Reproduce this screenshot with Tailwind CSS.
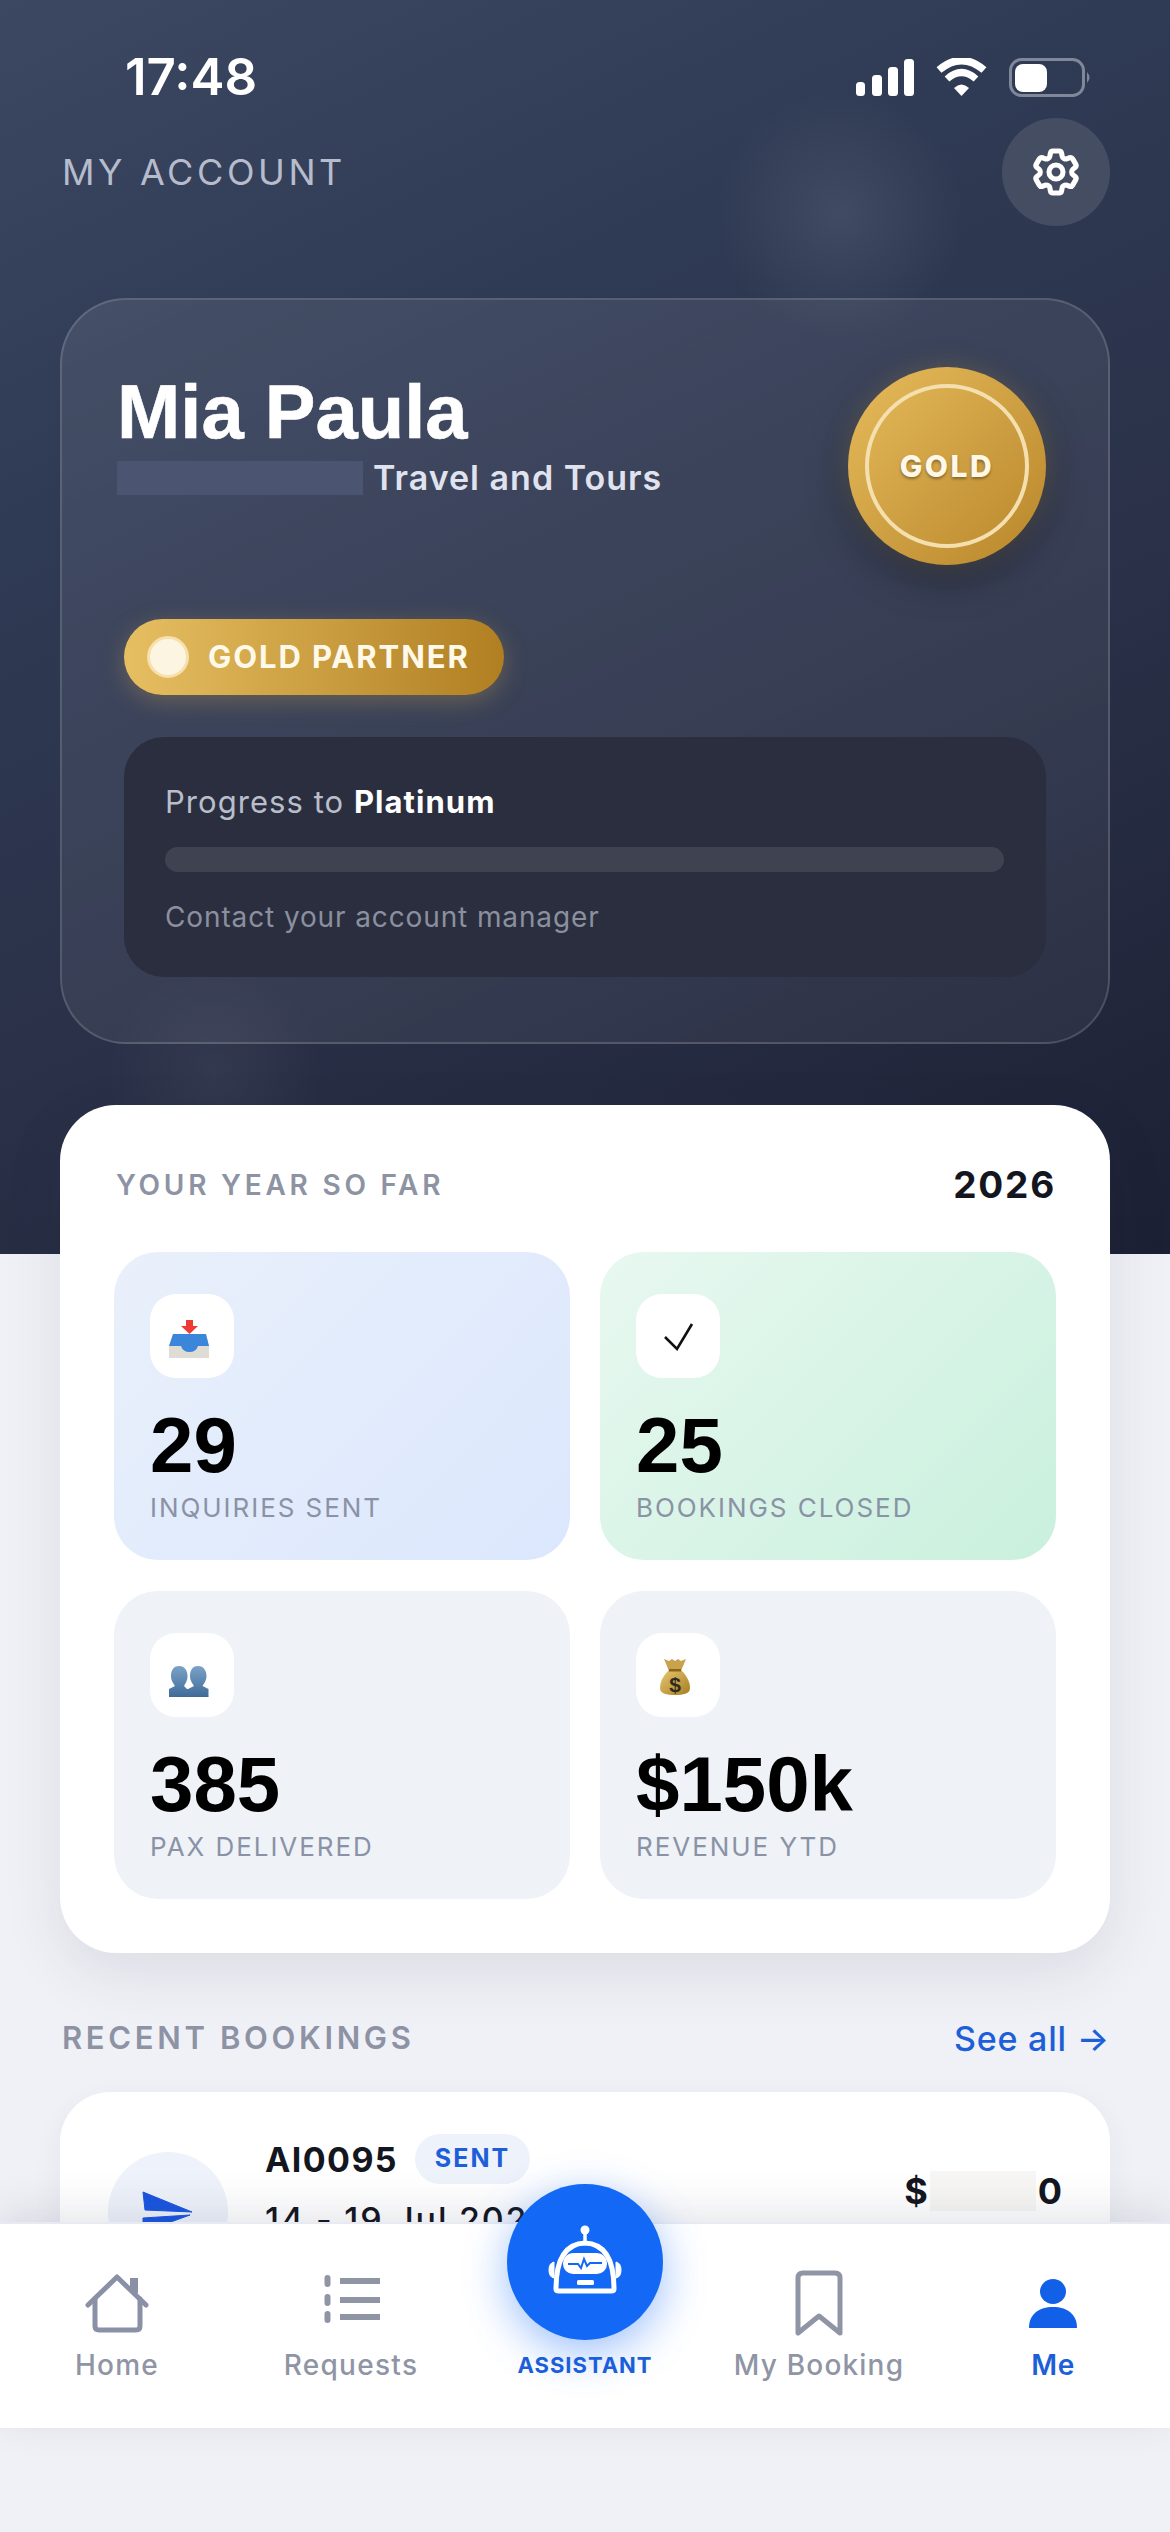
<!DOCTYPE html>
<html>
<head>
<meta charset="utf-8">
<script src="https://cdn.jsdelivr.net/npm/@tailwindcss/browser@4"></script>
</head>
<body>
<div class="relative w-[1170px] h-[2532px] overflow-hidden bg-[#f0f1f6] font-['Inter','Liberation_Sans',sans-serif]">

  <!-- Hero -->
  <div class="relative h-[1254px] bg-[linear-gradient(155deg,#3c4862_0%,#2f3a54_30%,#2a3148_60%,#1c2034_100%)]">
    <div class="absolute inset-0 bg-[radial-gradient(circle_at_840px_215px,rgba(255,255,255,0.09)_0px,rgba(255,255,255,0)_125px),radial-gradient(circle_at_215px_1075px,rgba(255,255,255,0.05)_0px,rgba(255,255,255,0)_110px)]"></div>

    <div class="relative">
      <!-- Status bar -->
      <div class="flex items-start justify-between pl-[125px] pr-[78px] pt-[47px] h-[118px]">
        <span class="text-[51px] leading-[60px] font-semibold text-white">17:48</span>
        <svg class="mt-[11px]" width="236" height="40" viewBox="856 58 236 40" fill="none">
          <rect x="856" y="82" width="9" height="14" rx="3.5" fill="#fff"/>
          <rect x="872" y="75" width="10" height="21" rx="3.5" fill="#fff"/>
          <rect x="888" y="67" width="10" height="29" rx="3.5" fill="#fff"/>
          <rect x="904" y="59" width="10" height="37" rx="3.5" fill="#fff"/>
          <path d="M939 70 Q961.5 51 984 70" stroke="#fff" stroke-width="7.5" fill="none"/>
          <path d="M947 79 Q961.5 66 976 79" stroke="#fff" stroke-width="7" fill="none"/>
          <path d="M954 88 L961.500 96 L969 88 Q961.500 81 954 88 Z" fill="#fff"/>
          <rect x="1010.500" y="59.500" width="73" height="36" rx="11" stroke="#7f8798" stroke-width="3"/>
          <rect x="1015" y="64" width="32" height="28" rx="8" fill="#fff"/>
          <path d="M1087 72 Q1092 77.500 1087 83 Z" fill="#7f8798"/>
        </svg>
      </div>

      <!-- Header -->
      <div class="flex items-center justify-between pl-[62px] pr-[60px] h-[108px]">
        <span class="text-[36px] leading-[44px] tracking-[3.600px] text-[#b6bccb] font-normal">MY ACCOUNT</span>
        <div class="flex h-[108px] w-[108px] items-center justify-center rounded-full bg-[#454d62]">
          <svg width="56" height="56" viewBox="0 0 24 24" fill="none" stroke="#fff" stroke-width="2.200" stroke-linejoin="round">
            <path d="M9.594 3.94c.09-.542.56-.94 1.11-.94h2.593c.55 0 1.02.398 1.11.94l.213 1.281c.063.374.313.686.645.87.074.04.147.083.22.127.325.196.72.257 1.075.124l1.217-.456a1.125 1.125 0 0 1 1.37.49l1.296 2.247a1.125 1.125 0 0 1-.26 1.431l-1.003.827c-.293.241-.438.613-.43.992a7.723 7.723 0 0 1 0 .255c-.008.378.137.75.43.991l1.004.827c.424.35.534.955.26 1.43l-1.298 2.247a1.125 1.125 0 0 1-1.369.491l-1.217-.456c-.355-.133-.75-.072-1.076.124a6.47 6.47 0 0 1-.22.128c-.331.183-.581.495-.644.869l-.213 1.281c-.09.543-.56.94-1.11.94h-2.594c-.55 0-1.019-.398-1.11-.94l-.213-1.281c-.062-.374-.312-.686-.644-.87a6.52 6.52 0 0 1-.22-.127c-.325-.196-.72-.257-1.076-.124l-1.217.456a1.125 1.125 0 0 1-1.369-.49l-1.297-2.247a1.125 1.125 0 0 1 .26-1.431l1.004-.827c.292-.24.437-.613.43-.991a6.932 6.932 0 0 1 0-.255c.007-.38-.138-.751-.43-.992l-1.004-.827a1.125 1.125 0 0 1-.26-1.43l1.297-2.247a1.125 1.125 0 0 1 1.37-.491l1.216.456c.356.133.751.072 1.076-.124.072-.044.146-.086.22-.128.332-.183.582-.495.644-.869l.214-1.28Z"/>
            <circle cx="12" cy="12" r="3"/>
          </svg>
        </div>
      </div>

      <!-- Account card -->
      <div class="mx-[60px] mt-[72px] h-[746px] rounded-[66px] border-2 border-white/15 bg-[linear-gradient(155deg,rgba(255,255,255,0.085),rgba(255,255,255,0.05))] px-[62px] pt-[67px]">
        <div class="flex items-start justify-between">
          <div class="-ml-[7px] pt-[5px]">
            <div class="font-['Liberation_Sans',sans-serif] text-[76px] leading-[80px] font-bold text-white [-webkit-text-stroke:0.6px_white]">Mia Paula</div>
            <div class="mt-[9px] flex items-center">
              <span class="h-[34px] w-[246px] bg-[#4b5571]"></span>
              <span class="ml-[10px] text-[34px] leading-[34px] font-semibold tracking-[1px] text-[#e0e3ee]">Travel and Tours</span>
            </div>
          </div>
          <div class="flex h-[198px] w-[198px] items-center justify-center rounded-full bg-[linear-gradient(135deg,#e6bb5c,#b8862a)] shadow-[0_14px_40px_rgba(0,0,0,0.35),0_0_24px_rgba(230,190,100,0.25)]">
            <div class="flex h-[164px] w-[164px] items-center justify-center rounded-full border-[4px] border-[#f4dfae]">
              <span class="text-[30px] font-extrabold tracking-[2.5px] text-[#fff8e8] [text-shadow:0_2px_3px_rgba(0,0,0,0.35)]">GOLD</span>
            </div>
          </div>
        </div>

        <div class="mt-[54px] flex h-[76px] w-[380px] items-center rounded-full bg-[linear-gradient(90deg,#e6bf62,#b07f22)] pl-[23px] shadow-[0_6px_24px_rgba(214,170,80,0.3)]">
          <span class="h-[42px] w-[42px] rounded-full border-[3px] border-[#f5e0ae] bg-[#fcf5e2]"></span>
          <span class="ml-[19px] text-[31px] font-bold tracking-[1.900px] text-[#fff9ea]">GOLD PARTNER</span>
        </div>

        <div class="mt-[42px] h-[240px] rounded-[40px] bg-[#2a2e3e] pl-[41px] pr-[42px] pt-[46px]">
          <div class="text-[31px] leading-[38px] tracking-[1.050px] text-[#b9becb]">Progress to <span class="font-bold text-white">Platinum</span></div>
          <div class="mt-[26px] h-[25px] rounded-full bg-[#3f4351]"></div>
          <div class="mt-[30px] text-[28px] leading-[30px] tracking-[0.880px] text-[#8b909f]">Contact your account manager</div>
        </div>
      </div>
    </div>
  </div>

  <!-- Year card -->
  <div class="relative mx-[60px] -mt-[149px] h-[848px] rounded-[56px] bg-white px-[54px] pt-[60px] shadow-[0_20px_60px_rgba(40,50,80,0.10)]">
    <div class="flex h-[40px] items-center justify-between pl-[2px]">
      <span class="text-[28px] font-semibold tracking-[3.750px] text-[#8d93a3]">YOUR YEAR SO FAR</span>
      <span class="text-[37px] font-bold tracking-[1.800px] text-[#14161f]">2026</span>
    </div>
    <div class="mt-[47px] grid grid-cols-2 gap-x-[30px] gap-y-[31px]">

      <div class="h-[308px] rounded-[44px] bg-[linear-gradient(135deg,#e9f0fb,#dbe7fd)] pl-[36px] pt-[42px]">
        <div class="h-[84px] w-[84px] rounded-[26px] bg-white">
          <svg width="84" height="84" viewBox="0 0 84 84">
            <path d="M36 26h7v6h5l-8.500 8-8.500-8h5z" fill="#ee3b33"/>
            <path d="M23 40h33l3 12v12H19V52z" fill="#dedcd5"/>
            <path d="M23 40h33l3 12H48q-2 6-8.500 6T31 52H19z" fill="#3b86da"/>
          </svg>
        </div>
        <div class="mt-[29px] font-['Liberation_Sans',sans-serif] text-[78px] leading-[76px] font-bold text-black">29</div>
        <div class="mt-[10px] text-[26px] leading-[30px] tracking-[1.950px] text-[#8a92a6]">INQUIRIES SENT</div>
      </div>

      <div class="h-[308px] rounded-[44px] bg-[linear-gradient(135deg,#e8f8f0,#c9f0dd)] pl-[36px] pt-[42px]">
        <div class="h-[84px] w-[84px] rounded-[26px] bg-white">
          <svg width="84" height="84" viewBox="0 0 84 84" fill="none">
            <path d="M29 43 L41 55 L56 30" stroke="#111" stroke-width="2.600"/>
          </svg>
        </div>
        <div class="mt-[29px] font-['Liberation_Sans',sans-serif] text-[78px] leading-[76px] font-bold text-black">25</div>
        <div class="mt-[10px] text-[26px] leading-[30px] tracking-[1.950px] text-[#8a92a6]">BOOKINGS CLOSED</div>
      </div>

      <div class="h-[308px] rounded-[44px] bg-[#eff3f8] pl-[36px] pt-[42px]">
        <div class="h-[84px] w-[84px] rounded-[26px] bg-white">
          <svg width="84" height="84" viewBox="0 0 84 84">
            <defs>
              <linearGradient id="bust" x1="0" y1="0" x2="0" y2="1"><stop offset="0" stop-color="#7ba3c8"/><stop offset="1" stop-color="#3f6b98"/></linearGradient>
            </defs>
            <path d="M29 33c6 0 8.500 5 8.500 10 0 5-2.500 8-3.500 10l3 3h2v8H19v-8l6-3c-1-2-4-5-4-10 0-5 2-10 8-10z" fill="url(#bust)"/>
            <path d="M48 33c6 0 8.500 5 8.500 10 0 5-3 8-4 10l6 3v8H38v-8l6-3c-1-2-4-5-4-10 0-5 2-10 8-10z" fill="url(#bust)"/>
          </svg>
        </div>
        <div class="mt-[29px] font-['Liberation_Sans',sans-serif] text-[78px] leading-[76px] font-bold text-black">385</div>
        <div class="mt-[10px] text-[26px] leading-[30px] tracking-[1.950px] text-[#8a92a6]">PAX DELIVERED</div>
      </div>

      <div class="h-[308px] rounded-[44px] bg-[#eff3f8] pl-[36px] pt-[42px]">
        <div class="h-[84px] w-[84px] rounded-[26px] bg-white">
          <svg width="84" height="84" viewBox="0 0 84 84">
            <defs>
              <linearGradient id="bag" x1="0" y1="0" x2="1" y2="1"><stop offset="0" stop-color="#e6c871"/><stop offset="1" stop-color="#a87d22"/></linearGradient>
            </defs>
            <path d="M28 26 L33 28 L36 26 L39 28 L42 26 L45 28 L50 26 L45 38 H33 Z" fill="#c9a24e"/>
            <path d="M33 37 H45 C52 44 54 50 54 55 C54 61 47 62 39 62 C31 62 24 61 24 55 C24 50 26 44 33 37Z" fill="url(#bag)"/>
            <rect x="33" y="36" width="12" height="2.500" fill="#8a6516"/>
            <text x="39" y="59" text-anchor="middle" font-family="Liberation Sans" font-size="21" font-weight="700" fill="#2d2a20">$</text>
          </svg>
        </div>
        <div class="mt-[29px] font-['Liberation_Sans',sans-serif] text-[78px] leading-[76px] font-bold text-black">$150k</div>
        <div class="mt-[10px] text-[26px] leading-[30px] tracking-[1.950px] text-[#8a92a6]">REVENUE YTD</div>
      </div>
    </div>
  </div>

  <!-- Recent bookings -->
  <div class="mt-[65px] flex h-[40px] items-center justify-between pl-[62px] pr-[60px]">
    <span class="text-[31px] font-semibold tracking-[3.650px] text-[#8d93a5]">RECENT BOOKINGS</span>
    <span class="text-[34px] font-medium tracking-[0.800px] text-[#1c5fd8]">See all →</span>
  </div>
  <div class="mx-[60px] mt-[34px] flex h-[300px] items-start rounded-[50px] bg-white pl-[48px] pr-[48px] pt-[42px] shadow-[0_10px_30px_rgba(40,50,80,0.06)]">
    <div class="mt-[18px] flex h-[120px] w-[120px] items-center justify-center rounded-full bg-[#eef2fa]">
      <svg width="56" height="48" viewBox="0 0 56 48" stroke-linejoin="round">
        <path d="M3 4 L52 24 L5 22 Z" fill="#1a56e0" stroke="#1a56e0" stroke-width="1"/>
        <path d="M3 30 L50 27 L3 44 Z" fill="#1a56e0" stroke="#1a56e0" stroke-width="1"/>
      </svg>
    </div>
    <div class="ml-[37px]">
      <div class="flex h-[50px] items-center">
        <span class="text-[34px] font-bold tracking-[1.400px] text-[#14161f]">AI0095</span>
        <span class="ml-[17px] flex h-[50px] w-[115px] items-center justify-center rounded-full bg-[#edf2fb] text-[25px] font-bold tracking-[2px] text-[#1c5fd8]">SENT</span>
      </div>
      <div class="mt-[16px] text-[34px] leading-[40px] font-medium tracking-[1.800px] text-[#14161f]">14 - 19 Jul 2026</div>
    </div>
    <div class="ml-auto mt-[37px] flex items-start text-[36px] leading-[40px] font-bold text-[#14161f]">
      <span>$</span>
      <span class="mx-[2px] h-[40px] w-[106px] bg-[#f7f6f4]"></span>
      <span>0</span>
    </div>
  </div>

  <!-- Bottom navigation -->
  <div class="absolute left-0 right-0 top-[2222px] grid h-[206px] grid-cols-5 border-t-2 border-[#e8eaf3] bg-white pt-[42px] shadow-[0_-10px_40px_rgba(40,50,80,0.12)]">
    <div class="flex flex-col items-center">
      <svg width="74" height="74" viewBox="0 0 74 74" fill="none" stroke="#8a91a6" stroke-width="5" stroke-linejoin="round" stroke-linecap="round">
        <path d="M8 39 L37 11 L66 39"/>
        <path d="M15 33 V60 Q15 64 19 64 H56 Q60 64 60 60 V33"/>
        <rect x="50" y="12" width="8" height="15" fill="#8a91a6" stroke="none"/>
      </svg>
      <span class="mt-[7px] text-[28px] leading-[36px] font-medium tracking-[1.200px] text-[#8f95a5]">Home</span>
    </div>
    <div class="flex flex-col items-center">
      <svg width="74" height="74" viewBox="0 0 74 74" fill="none" stroke="#8f95a5" stroke-width="6">
        <path d="M26 15 H66 M26 34 H66 M26 51 H66"/>
        <path d="M13.500 12 V18 M13.500 31 V37 M13.500 48 V54" stroke-linecap="round"/>
      </svg>
      <span class="mt-[7px] text-[28px] leading-[36px] font-medium tracking-[1.300px] text-[#8f95a5]">Requests</span>
    </div>
    <div class="flex flex-col items-center">
      <div class="h-[74px] w-[74px]"></div>
      <span class="mt-[7px] text-[22px] leading-[36px] font-bold tracking-[1px] text-[#1c5fd8]">ASSISTANT</span>
    </div>
    <div class="flex flex-col items-center">
      <svg width="74" height="74" viewBox="0 0 74 74" fill="none" stroke="#8f95a5" stroke-width="5" stroke-linejoin="round">
        <path d="M16 12 Q16 7 21 7 H53 Q58 7 58 12 V67 L37 50 L16 67 Z"/>
      </svg>
      <span class="mt-[7px] text-[28px] leading-[36px] font-medium tracking-[1.200px] text-[#8f95a5]">My Booking</span>
    </div>
    <div class="flex flex-col items-center">
      <svg width="74" height="74" viewBox="0 0 74 74" fill="#1360e8">
        <ellipse cx="37" cy="25.500" rx="13" ry="12.500"/>
        <path d="M13 62 C13 48 23 41 37 41 S61 48 61 62 Z"/>
      </svg>
      <span class="mt-[7px] text-[28px] leading-[36px] font-semibold tracking-[0.600px] text-[#1c5fd8]">Me</span>
    </div>
  </div>

  <!-- Assistant button -->
  <div class="absolute left-[507px] top-[2184px] h-[156px] w-[156px] rounded-full bg-[#1368f5] shadow-[0_12px_44px_rgba(19,104,245,0.42)]">
    <svg width="156" height="156" viewBox="27 24 156 156" fill="none">
      <circle cx="105" cy="70" r="4.500" fill="#fff"/>
      <path d="M105 72 V82" stroke="#fff" stroke-width="3.500"/>
      <path d="M76 129 Q76 84 105 83 Q134 84 134 129 Q134 131 131 131 H79 Q76 131 76 129 Z" stroke="#fff" stroke-width="5"/>
      <path d="M74 102 Q69 103 69 110 Q69 117 74 118 Z" fill="#fff" stroke="#fff" stroke-width="1"/>
      <path d="M136 102 Q141 103 141 110 Q141 117 136 118 Z" fill="#fff" stroke="#fff" stroke-width="1"/>
      <rect x="83" y="93" width="44" height="21" rx="10" fill="#fff"/>
      <path d="M88 104 H98 L101 108 L104 99 L107 106 L110 103 H122" stroke="#1368f5" stroke-width="2"/>
      <rect x="97" y="120" width="17" height="5" rx="1.500" fill="#fff"/>
    </svg>
  </div>
</div>
</body>
</html>
